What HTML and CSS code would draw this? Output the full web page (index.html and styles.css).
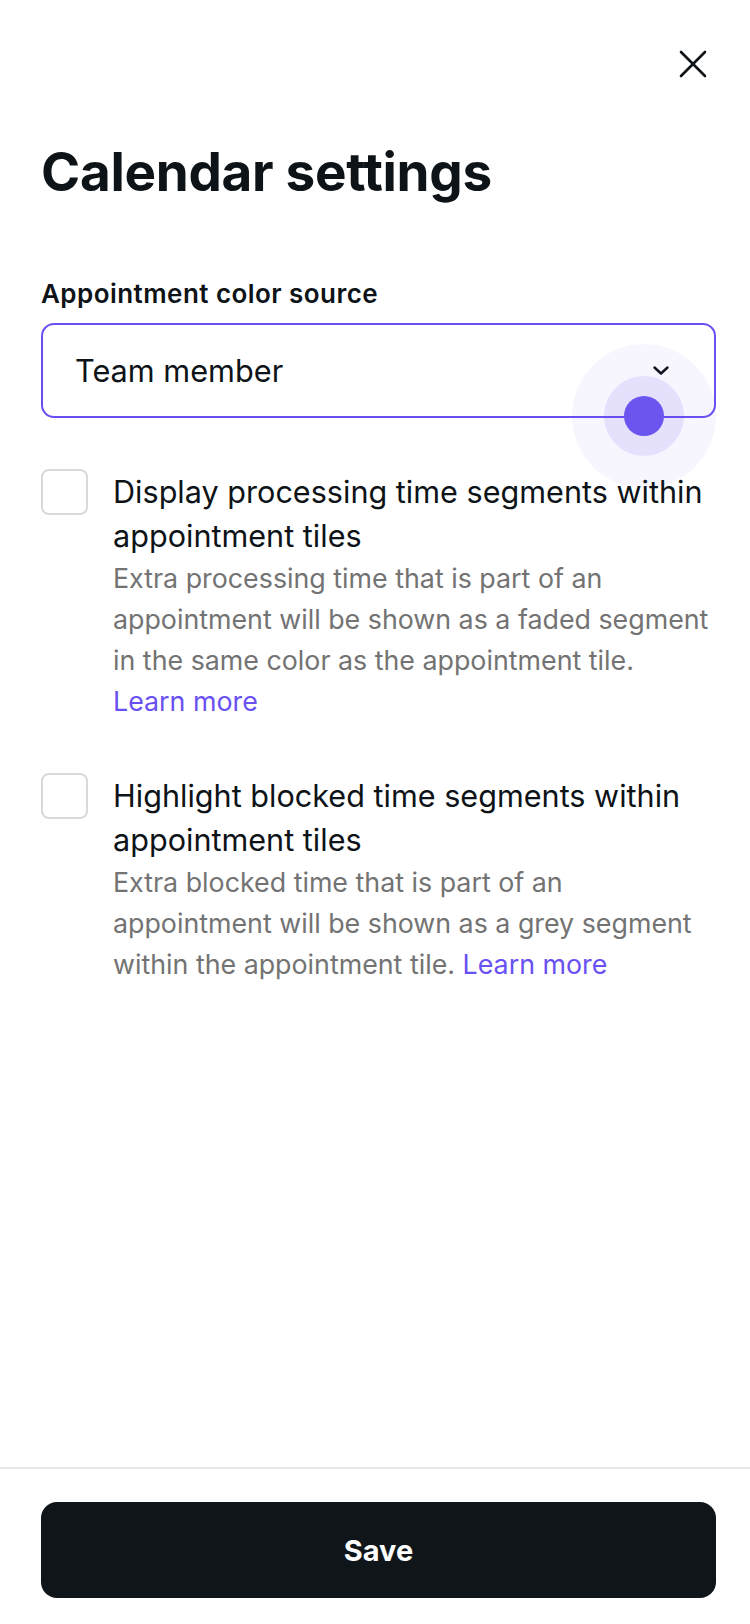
FILE: index.html
```html
<!DOCTYPE html>
<html lang="en">
<head>
<meta charset="utf-8">
<title>Calendar settings</title>
<link rel="stylesheet" href="styles.css">
</head>
<body>
<div class="page">
  <main class="content">
    <div class="topbar">
      <button class="close" aria-label="Close">
        <svg width="30" height="30" viewBox="0 0 30 30" fill="none" stroke="#0d1317" stroke-width="2.6" stroke-linecap="round"><path d="M3 3 L27 27 M27 3 L3 27"/></svg>
      </button>
    </div>
    <h1 class="title">Calendar settings</h1>

    <div class="field">
      <label class="field-label">Appointment color source</label>
      <div class="select">
        <span class="select-value">Team member</span>
        <svg class="chevron" width="18" height="11" viewBox="0 0 18 11" fill="none" stroke="#0d1317" stroke-width="2.5" stroke-linecap="round" stroke-linejoin="round"><path d="M2.5 2.5 L9 8.5 L15.5 2.5"/></svg>
        <span class="touch"><span class="touch-inner"><span class="touch-dot"></span></span></span>
      </div>
    </div>

    <div class="option">
      <span class="checkbox"></span>
      <div class="option-text">
        <div class="option-label">Display processing time segments within appointment tiles</div>
        <div class="option-desc">Extra processing time that is part of an appointment will be shown as a faded segment in the same color as the appointment tile. <a class="link">Learn more</a></div>
      </div>
    </div>

    <div class="option">
      <span class="checkbox"></span>
      <div class="option-text">
        <div class="option-label">Highlight blocked time segments within appointment tiles</div>
        <div class="option-desc">Extra blocked time that is part of an appointment will be shown as a grey segment within the appointment tile. <a class="link">Learn more</a></div>
      </div>
    </div>
  </main>

  <footer class="footer">
    <button class="save">Save</button>
  </footer>
</div>
</body>
</html>
```

FILE: styles.css
```css
* { box-sizing: border-box; }
html, body { margin: 0; padding: 0; background: #ffffff; }
body {
  font-family: Inter, "Noto Sans", "Liberation Sans", sans-serif;
  color: #0d1317;
}
.page {
  width: 750px;
  height: 1624px;
  display: flex;
  flex-direction: column;
}
.content {
  flex: 1;
  padding: 0 34px 0 41px;
}
.topbar {
  display: flex;
  justify-content: flex-end;
  padding-top: 44px;
  margin-right: 3px;
}
.close {
  width: 40px;
  height: 40px;
  padding: 0;
  border: 0;
  background: none;
  display: flex;
  align-items: center;
  justify-content: center;
}
.title {
  margin: 56px 0 0 0;
  font-size: 53px;
  line-height: 64px;
  font-weight: 700;
  letter-spacing: -0.3px;
}
.field { margin-top: 74px; }
.field-label {
  display: block;
  font-size: 26px;
  line-height: 32px;
  font-weight: 600;
  letter-spacing: 0.45px;
}
.select {
  position: relative;
  margin-top: 13px;
  height: 95px;
  border: 2px solid #6950f3;
  border-radius: 13px;
  display: flex;
  align-items: center;
  justify-content: space-between;
  padding: 0 44px 0 32px;
}
.select-value {
  font-size: 30.7px;
  line-height: 40px;
}
.chevron { display: block; }
.touch {
  position: absolute;
  left: 529px;
  top: 19px;
  width: 144px;
  height: 144px;
  border-radius: 50%;
  background: rgba(105, 80, 243, 0.05);
  display: flex;
  align-items: center;
  justify-content: center;
}
.touch-inner {
  width: 80px;
  height: 80px;
  border-radius: 50%;
  background: rgba(105, 80, 243, 0.13);
  display: flex;
  align-items: center;
  justify-content: center;
}
.touch-dot {
  width: 40px;
  height: 40px;
  border-radius: 50%;
  background: #6a55ee;
}
.option {
  display: flex;
  align-items: flex-start;
  gap: 25px;
  margin-top: 51px;
}
.checkbox {
  flex: none;
  width: 47px;
  height: 46px;
  border: 2px solid #d9d9d9;
  border-radius: 8px;
}
.option-text { flex: 1; margin-top: 1px; }
.option-label {
  font-size: 30.6px;
  line-height: 44px;
  color: #0d1317;
}
.option-desc {
  font-size: 26.8px;
  line-height: 41px;
  color: #737373;
}
.link { color: #6950f3; text-decoration: none; white-space: nowrap; }
.footer {
  border-top: 2px solid #e6e6e6;
  padding: 33px 34px 26px 41px;
}
.save {
  display: block;
  width: 100%;
  height: 96px;
  border: 0;
  border-radius: 16px;
  background: #0f1519;
  color: #ffffff;
  font-family: Inter, "Liberation Sans", sans-serif;
  font-size: 29px;
  font-weight: 700;
}
```
